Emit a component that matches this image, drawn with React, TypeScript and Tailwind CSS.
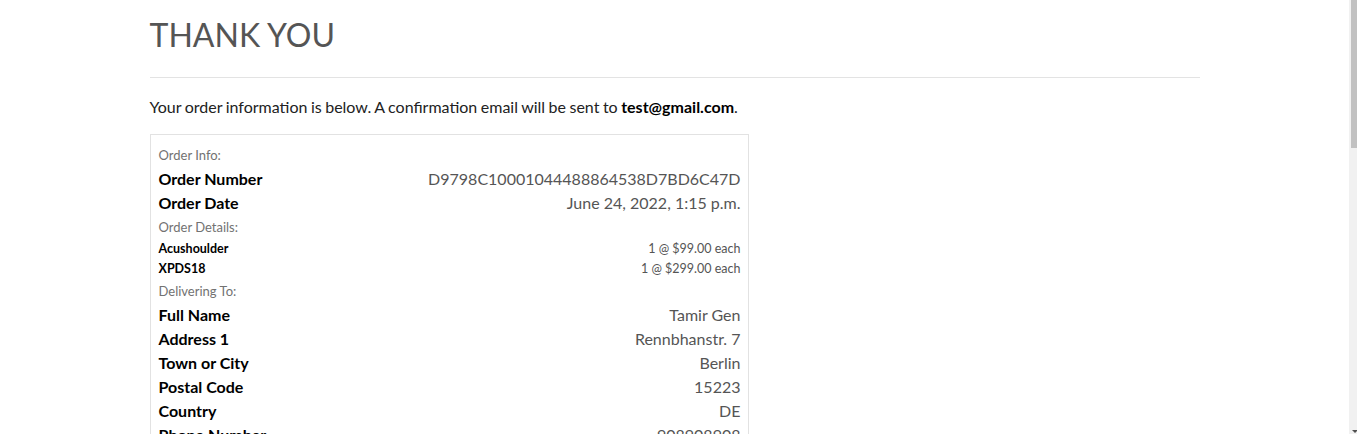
import React from "react";

type Row =
  | { kind: "head"; text: string }
  | { kind: "big"; label: string; value: string }
  | { kind: "small"; label: string; value: string };

const rows: Row[] = [
  { kind: "head", text: "Order Info:" },
  { kind: "big", label: "Order Number", value: "D9798C10001044488864538D7BD6C47D" },
  { kind: "big", label: "Order Date", value: "June 24, 2022, 1:15 p.m." },
  { kind: "head", text: "Order Details:" },
  { kind: "small", label: "Acushoulder", value: "1 @ $99.00 each" },
  { kind: "small", label: "XPDS18", value: "1 @ $299.00 each" },
  { kind: "head", text: "Delivering To:" },
  { kind: "big", label: "Full Name", value: "Tamir Gen" },
  { kind: "big", label: "Address 1", value: "Rennbhanstr. 7" },
  { kind: "big", label: "Town or City", value: "Berlin" },
  { kind: "big", label: "Postal Code", value: "15223" },
  { kind: "big", label: "Country", value: "DE" },
  { kind: "big", label: "Phone Number", value: "908908908" },
];

export default function App() {
  return (
    <div
      className="flex h-[434px] overflow-hidden bg-white"
      style={{ fontFamily: "Lato, 'Open Sans', sans-serif" }}
    >
      <div className="flex-1">
        <div className="mx-auto w-[1050px] pt-[10px]">
          <h1 className="text-[32px] font-normal leading-[50px] text-[#555]">
            THANK YOU
          </h1>
          <hr className="mt-[17px] border-t border-[#e3e3e3]" />
          <p className="mt-[17px] text-[16px] leading-[24px] text-[#222] [word-spacing:-0.6px]">
            Your order information is below. A confirmation email will be sent to{" "}
            <strong className="font-bold text-black">test@gmail.com</strong>.
          </p>
          <div className="mt-[15px] w-[599px] border border-[#e2e2e2] pl-[8px] pr-[7px] pt-[8px]">
            {rows.map((r, i) => {
              if (r.kind === "head")
                return (
                  <div key={i} className="h-[24px] pt-[1px] text-[13px] leading-[23px] text-[#727272]">
                    {r.text}
                  </div>
                );
              if (r.kind === "small")
                return (
                  <div key={i} className="flex h-[20px] items-center justify-between text-[12.5px]">
                    <span className="font-bold text-black">{r.label}</span>
                    <span className="text-[#555]">{r.value}</span>
                  </div>
                );
              return (
                <div key={i} className="flex h-[24px] items-center justify-between text-[16px]">
                  <span className="font-bold text-black">{r.label}</span>
                  <span className="text-[#555]">{r.value}</span>
                </div>
              );
            })}
          </div>
        </div>
      </div>
      <div className="relative h-[434px] w-[8px] bg-[#f1f1f1]">
        <div className="ml-[2px] h-[148px] w-[6px] bg-[#c1c1c1]" />
        <div className="absolute bottom-[1px] left-[3px] h-0 w-0 border-l-[3px] border-r-[3px] border-t-[3px] border-l-transparent border-r-transparent border-t-[#505050]" />
      </div>
    </div>
  );
}
